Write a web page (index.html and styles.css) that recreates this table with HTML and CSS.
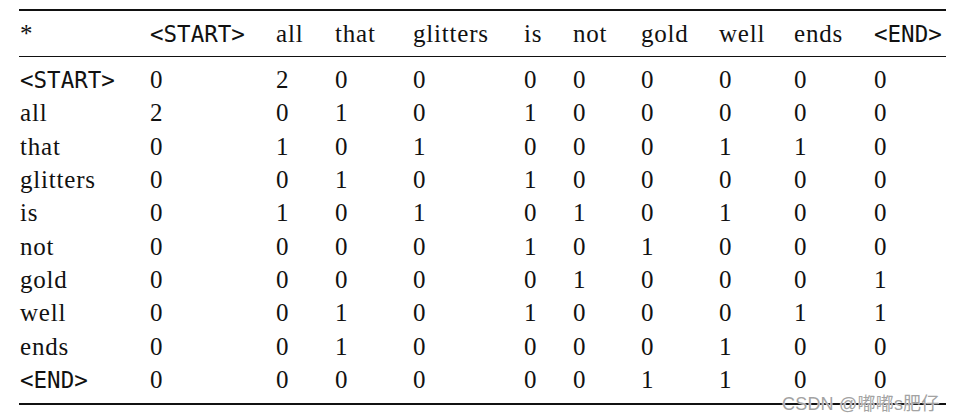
FILE: index.html
```html
<!DOCTYPE html>
<html lang="en">
<head>
  <meta charset="UTF-8">
  <title>Co-occurrence matrix</title>
  <link rel="stylesheet" href="styles.css">
</head>
<body>

  <div class="sheet">
    <table class="matrix">
      <colgroup>
        <col class="w-129"><col class="w-126"><col class="w-59"><col class="w-78">
        <col class="w-111"><col class="w-49"><col class="w-68"><col class="w-78">
        <col class="w-75"><col class="w-80"><col class="w-73">
      </colgroup>
      <thead>
        <tr>
          <th>*</th>
          <th class="tt">&lt;START&gt;</th>
          <th>all</th>
          <th>that</th>
          <th>glitters</th>
          <th>is</th>
          <th>not</th>
          <th>gold</th>
          <th>well</th>
          <th>ends</th>
          <th class="tt">&lt;END&gt;</th>
        </tr>
      </thead>
      <tbody>
        <tr><td class="tt">&lt;START&gt;</td><td>0</td><td>2</td><td>0</td><td>0</td><td>0</td><td>0</td><td>0</td><td>0</td><td>0</td><td>0</td></tr>
        <tr><td>all</td><td>2</td><td>0</td><td>1</td><td>0</td><td>1</td><td>0</td><td>0</td><td>0</td><td>0</td><td>0</td></tr>
        <tr><td>that</td><td>0</td><td>1</td><td>0</td><td>1</td><td>0</td><td>0</td><td>0</td><td>1</td><td>1</td><td>0</td></tr>
        <tr><td>glitters</td><td>0</td><td>0</td><td>1</td><td>0</td><td>1</td><td>0</td><td>0</td><td>0</td><td>0</td><td>0</td></tr>
        <tr><td>is</td><td>0</td><td>1</td><td>0</td><td>1</td><td>0</td><td>1</td><td>0</td><td>1</td><td>0</td><td>0</td></tr>
        <tr><td>not</td><td>0</td><td>0</td><td>0</td><td>0</td><td>1</td><td>0</td><td>1</td><td>0</td><td>0</td><td>0</td></tr>
        <tr><td>gold</td><td>0</td><td>0</td><td>0</td><td>0</td><td>0</td><td>1</td><td>0</td><td>0</td><td>0</td><td>1</td></tr>
        <tr><td>well</td><td>0</td><td>0</td><td>1</td><td>0</td><td>1</td><td>0</td><td>0</td><td>0</td><td>1</td><td>1</td></tr>
        <tr><td>ends</td><td>0</td><td>0</td><td>1</td><td>0</td><td>0</td><td>0</td><td>0</td><td>1</td><td>0</td><td>0</td></tr>
        <tr><td class="tt">&lt;END&gt;</td><td>0</td><td>0</td><td>0</td><td>0</td><td>0</td><td>0</td><td>1</td><td>1</td><td>0</td><td>0</td></tr>
      </tbody>
    </table>
    <div class="watermark">CSDN @嘟嘟s肥仔</div>
  </div>

</body>
</html>
```

FILE: styles.css
```css
* {
  box-sizing: border-box;
}
body {
  margin: 0;
  background: #fff;
  color: #111;
  font-family: 'Liberation Serif', serif;
}
.sheet {
  position: relative;
  width: 954px;
  height: 418px;
  padding: 9px 0 0 19px;
}
.matrix {
  width: 927px;
  table-layout: fixed;
  border-collapse: separate;
  border-spacing: 0;
  border-top: 2px solid #111;
  border-bottom: 2px solid #111;
  font-size: 25px;
  letter-spacing: 0.8px;
}
.w-129 { width: 130px; }
.w-126 { width: 126px; }
.w-59 { width: 59px; }
.w-78 { width: 78px; }
.w-111 { width: 111px; }
.w-49 { width: 49px; }
.w-68 { width: 68px; }
.w-75 { width: 75px; }
.w-80 { width: 80px; }
.w-73 { width: 73px; }
th, td {
  padding: 0 0 0 1px;
  text-align: left;
  font-weight: normal;
  white-space: nowrap;
  vertical-align: baseline;
}
th {
  height: 45px;
  line-height: 45px;
  border-bottom: 1px solid #111;
}
td {
  line-height: 33.33px;
}
tbody tr:first-child td {
  padding-top: 6px;
}
tbody tr:last-child td {
  padding-bottom: 6.5px;
}
.matrix .tt {
  font-family: 'DejaVu Sans Mono', monospace;
  font-size: 22.5px;
  line-height: 20px;
  letter-spacing: 0;
}
.watermark {
  position: absolute;
  left: 782px;
  top: 389px;
  font-family: 'Liberation Sans', 'Noto Sans CJK SC', sans-serif;
  font-size: 18px;
  color: #a3a3a3;
  letter-spacing: 0.2px;
  text-shadow: 0 0 1px #fff, 0 0 1px #fff;
}
```
